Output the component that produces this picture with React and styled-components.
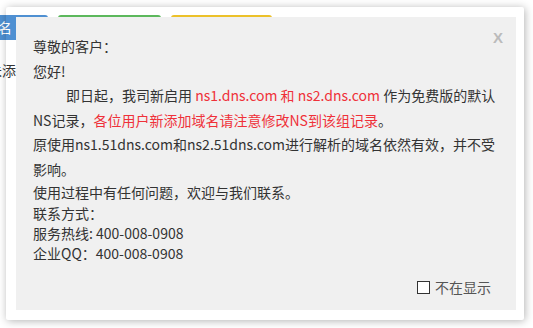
import React from "react";
import styled, { createGlobalStyle } from "styled-components";

const Global = createGlobalStyle`
  html, body { margin: 0; padding: 0; background: #fff; }
  body {
    font-family: "Microsoft YaHei", "Noto Sans CJK SC", "Noto Sans", sans-serif;
    font-size: 14px;
    color: #333;
    overflow: hidden;
  }
`;

const Page = styled.div`
  position: relative;
  width: 533px;
  height: 328px;
  overflow: hidden;
`;

const TabRow = styled.div`
  display: flex;
  gap: 10px;
  padding-top: 15px;
  margin-left: -55px;
`;

const Tab = styled.div`
  width: ${(p) => p.$w}px;
  height: 25px;
  border-radius: 3px 3px 0 0;
  background: ${(p) => p.$bg};
  color: #fff;
  display: flex;
  align-items: center;
  justify-content: flex-end;
  padding-right: 36px;
  box-sizing: border-box;
  white-space: nowrap;
  line-height: 25px;
`;

const Hint = styled.div`
  margin-top: 20px;
  margin-left: -12px;
  white-space: nowrap;
  line-height: 20px;
`;

const Layer = styled.div`
  position: absolute;
  left: 6px;
  top: 7px;
  width: 518px;
  height: 313px;
  box-sizing: border-box;
  padding: 10px 8px 10px 10px;
  border-radius: 2px;
  box-shadow: 1px 1px 9px rgba(0, 0, 0, 0.3);
`;

const Panel = styled.div`
  position: relative;
  height: 100%;
  background: #f0f0f0;
  padding: 17px 0 0 17px;
  box-sizing: border-box;
  display: flex;
  flex-direction: column;
`;

const Close = styled.span`
  position: absolute;
  right: 13px;
  top: 12px;
  font-family: "Liberation Sans", Arial, sans-serif;
  font-weight: bold;
  font-size: 15px;
  color: #bbb;
`;

const Para = styled.p`
  margin: 0;
  line-height: ${(p) => p.$lh || 24.6}px;
  white-space: nowrap;
  text-indent: ${(p) => (p.$indent ? "33px" : "0")};
`;

const Red = styled.span`
  color: #ef3139;
`;

const Footer = styled.label`
  margin-top: auto;
  margin-bottom: 13px;
  align-self: flex-end;
  margin-right: 25px;
  display: flex;
  align-items: center;
  gap: 5px;
  color: #555;
  line-height: 20px;
`;

const Box = styled.span`
  display: inline-block;
  width: 13px;
  height: 13px;
  box-sizing: border-box;
  border: 1.5px solid #333;
  background: #fff;
`;

export default function App() {
  return (
    <>
      <Global />
      <Page>
        <TabRow>
          <Tab $w={103} $bg="#4f90d2">添加域名</Tab>
          <Tab $w={103} $bg="#5cb85c" />
          <Tab $w={101} $bg="#ecc12a" />
        </TabRow>
        <Hint>未添加</Hint>
        <Layer>
          <Panel>
            <Close>X</Close>
            <Para>尊敬的客户：</Para>
            <Para>您好!</Para>
            <Para $indent>
              即日起，我司新启用 <Red>ns1.dns.com 和 ns2.dns.com</Red> 作为免费版的默认
            </Para>
            <Para>
              NS记录，<Red>各位用户新添加域名请注意修改NS到该组记录</Red>。
            </Para>
            <Para>原使用ns1.51dns.com和ns2.51dns.com进行解析的域名依然有效，并不受</Para>
            <Para>影响。</Para>
            <Para $lh={21}>使用过程中有任何问题，欢迎与我们联系。</Para>
            <Para $lh={20}>联系方式：</Para>
            <Para $lh={20}>服务热线: 400-008-0908</Para>
            <Para $lh={20}>企业QQ：400-008-0908</Para>
            <Footer>
              <Box />
              不在显示
            </Footer>
          </Panel>
        </Layer>
      </Page>
    </>
  );
}
